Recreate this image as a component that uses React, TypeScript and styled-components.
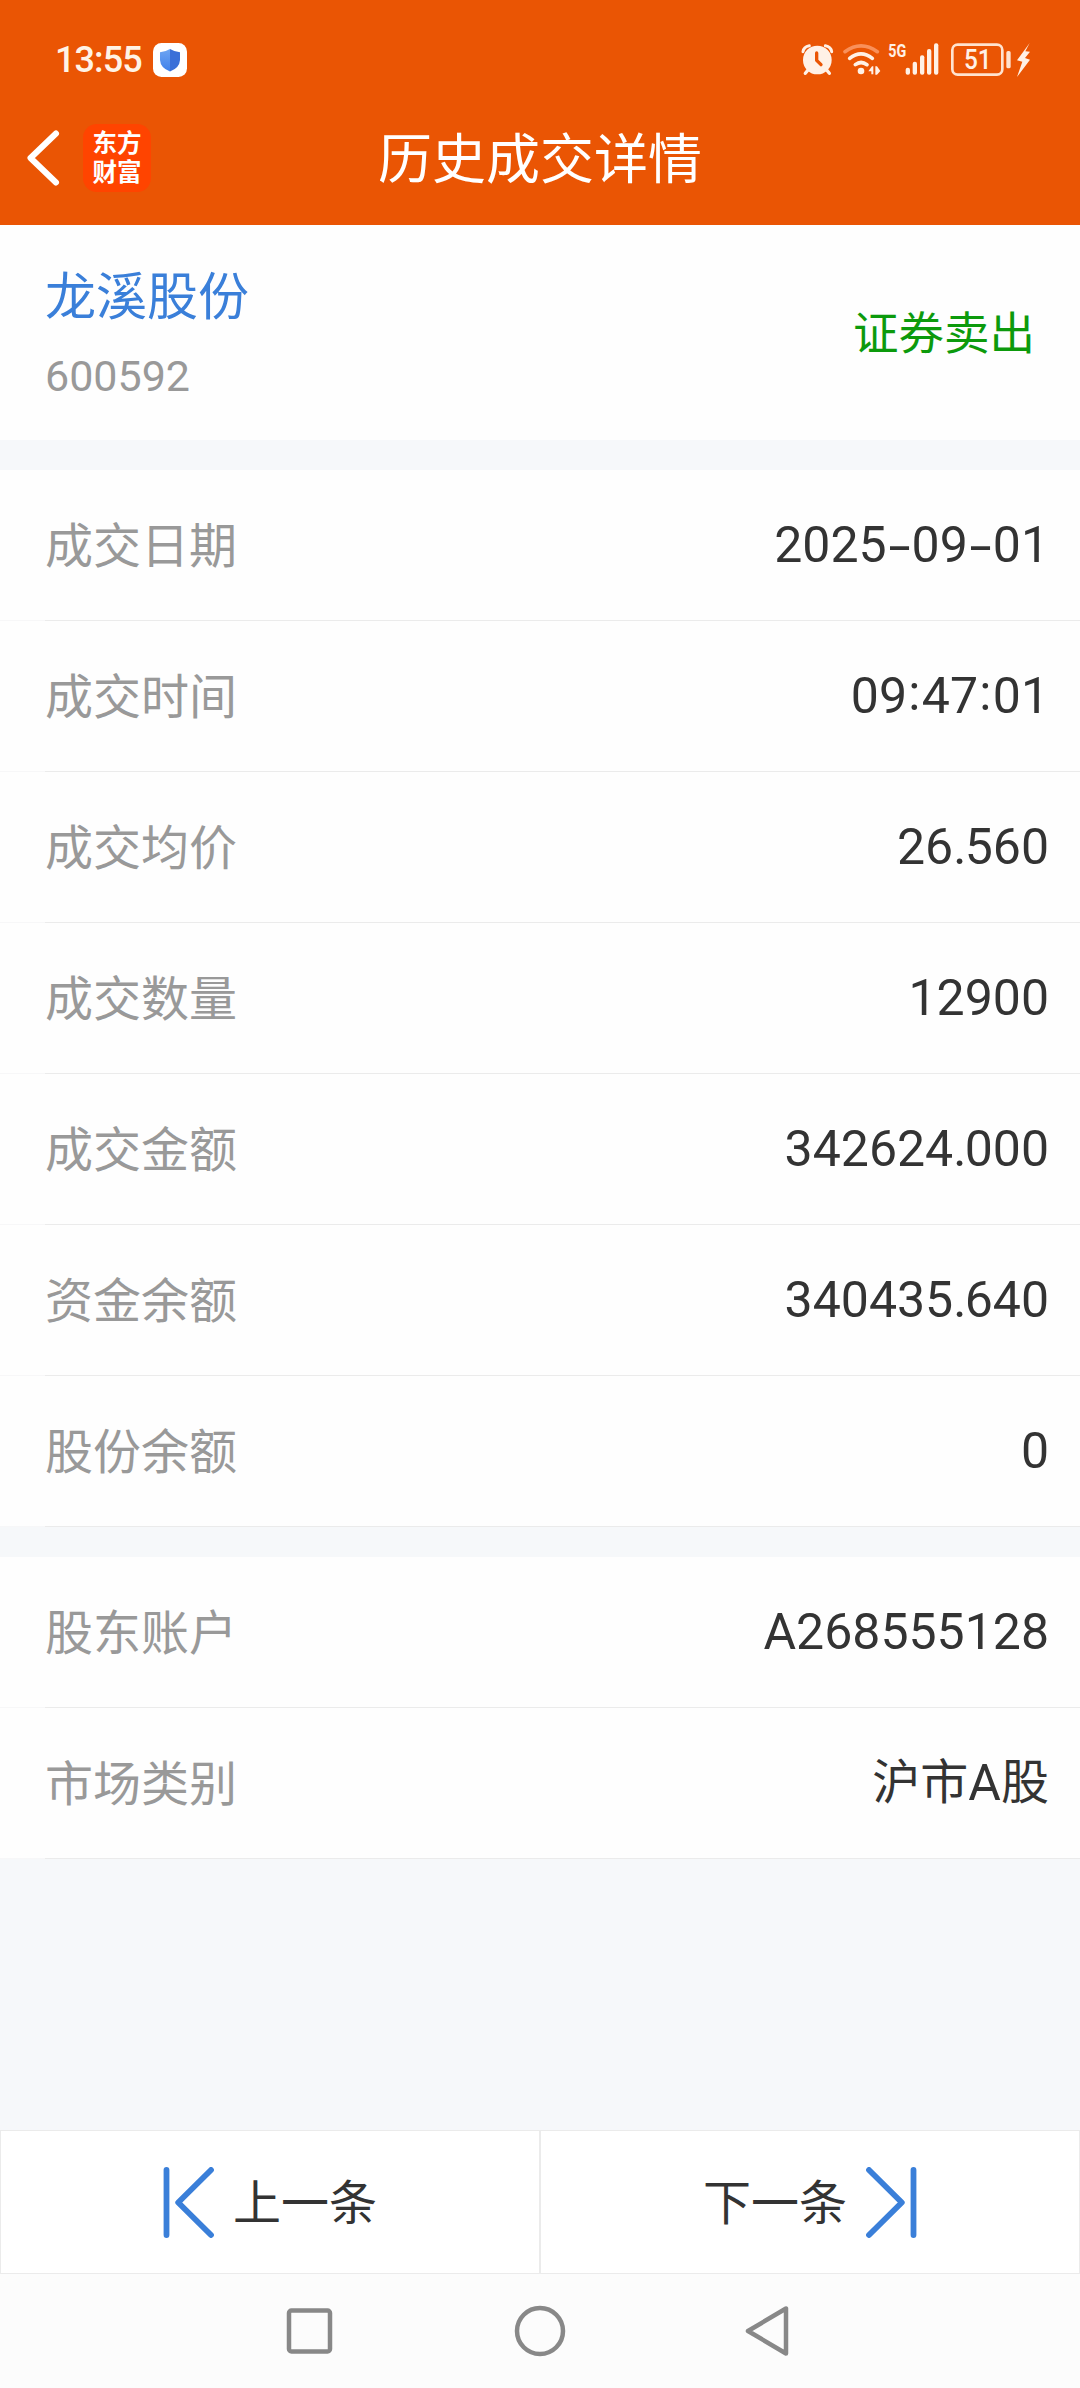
import React from 'react';
import styled, { createGlobalStyle } from 'styled-components';

const cjk = '"Noto Sans CJK SC", sans-serif';
const mixed = 'Roboto, "Noto Sans CJK SC", sans-serif';

const GlobalStyle = createGlobalStyle`
  * { box-sizing: border-box; }
  body { margin: 0; background: #f6f8fa; }
`;

const Screen = styled.div`
  width: 1080px;
  height: 2388px;
  display: flex;
  flex-direction: column;
  background: #f6f8fa;
  color: #333;
  font-family: ${mixed};
  overflow: hidden;
`;

const Header = styled.header`
  height: 225px;
  flex: none;
  background: #ea5504;
  color: #fff;
`;

const StatusBar = styled.div`
  height: 90px;
  padding: 30px 46px 0 55px;
  display: flex;
  align-items: center;
  color: #fff3e6;
`;

const Clock = styled.span`
  width: 98px;
  font-size: 36px;
  font-weight: 500;
  line-height: 40px;
  letter-spacing: -0.9px;
  white-space: nowrap;
`;

const StatusIcons = styled.div`
  display: flex;
  margin-left: auto;
`;

const TitleBar = styled.div`
  height: 135px;
  display: grid;
  grid-template-columns: 240px 1fr 240px;
  align-items: center;
`;

const TitleLeft = styled.div`
  display: flex;
  align-items: center;
  gap: 22px;
  padding-left: 25px;
`;

const AppLogo = styled.div`
  width: 68px;
  height: 68px;
  border-radius: 14px;
  background: #ff4400;
  display: flex;
  flex-direction: column;
  align-items: center;
  justify-content: center;
  font-family: ${cjk};
  font-weight: 700;
  font-size: 24.5px;
  line-height: 29px;
  padding-bottom: 4px;
`;

const Title = styled.h1`
  margin: 0;
  padding-bottom: 3px;
  font-family: ${cjk};
  font-weight: 400;
  font-size: 54px;
  line-height: 80px;
  text-align: center;
`;

const StockCard = styled.section`
  height: 215px;
  flex: none;
  margin-bottom: 30px;
  padding: 0 45px;
  background: #fefefe;
  display: flex;
  justify-content: space-between;
  align-items: center;
`;

const StockName = styled.div`
  font-family: ${cjk};
  font-size: 51px;
  line-height: 76px;
  color: #3a7fd9;
`;

const StockCode = styled.div`
  font-size: 43px;
  line-height: 60px;
  margin: 15px 0 5px;
  color: #999;
`;

const Side = styled.div`
  padding-bottom: 6px;
  font-family: ${cjk};
  font-size: 45.5px;
  line-height: 68px;
  color: #0c9a0c;
`;

const Group = styled.section`
  flex: none;
  margin-bottom: 30px;
`;

const Row = styled.div`
  height: 151px;
  padding: 0 31px 1px 45px;
  display: flex;
  justify-content: space-between;
  align-items: center;
  background:
    linear-gradient(to right, #f7f7f8 45px, #ebebeb 45px) bottom / 100% 1px no-repeat,
    #fefefe;
`;

const Label = styled.span`
  padding-bottom: 6px;
  font-family: ${cjk};
  font-size: 48px;
  line-height: 72px;
  color: #999;
`;

const ValueText = styled.span`
  font-size: 50px;
  line-height: 72px;
  color: #333;
  white-space: nowrap;
`;

const Hanzi = styled.span`
  font-family: ${cjk};
  font-size: 48px;
  line-height: 1;
  vertical-align: 1px;
`;

const Punct = styled.span<{ $w: number; $stretch?: number; $up?: number }>`
  display: inline-block;
  width: ${p => p.$w}px;
  text-align: center;
  transform: translateY(${p => -(p.$up ?? 0)}px) scaleX(${p => p.$stretch ?? 1});
`;

const Actions = styled.div`
  margin-top: auto;
  height: 144px;
  flex: none;
  display: grid;
  grid-template-columns: 1fr 1fr;
`;

const ActionButton = styled.button`
  border: 1px solid #ebebeb;
  margin: 0;
  padding: 0;
  background: #fff;
  display: flex;
  align-items: center;
  justify-content: center;
  gap: 19px;
  font-family: ${cjk};
  font-size: 48px;
  line-height: 72px;
  color: #333;
`;

const ActionText = styled.span`
  padding-bottom: 6px;
`;

const NavBar = styled.nav`
  height: 114px;
  flex: none;
  background: #fcfcfc;
  display: flex;
  justify-content: center;
  align-items: center;
  gap: 178px;
`;

const ShieldBadge = () => (
  <svg width="34" height="34" viewBox="0 0 34 34">
    <defs>
      <linearGradient id="shieldLeft" x1="0" y1="0" x2="0" y2="1">
        <stop offset="0" stopColor="#6ea5f2" />
        <stop offset="1" stopColor="#3f80ea" />
      </linearGradient>
    </defs>
    <rect width="34" height="34" rx="8.5" fill="#fff" />
    <path d="M17 6 Q12 9 7 9.3 V17 Q7.500 25 17 28.500 Z" fill="url(#shieldLeft)" />
    <path d="M17 6 Q22 9 27 9.3 V17 Q26.500 25 17 28.500 Z" fill="#3a6fd8" />
  </svg>
);

const SystemIcons = () => (
  <svg width="234" height="40" viewBox="60 60 702 120" fill="#fff1e6">
    <circle cx="112" cy="120" r="43" />
    <path d="M69 95 Q71 80 88 77M155 95 Q153 80 136 77" stroke="#fff1e6" strokeWidth="9" strokeLinecap="round" fill="none" />
    <path d="M84 150 L76 160M140 150 L148 160" stroke="#fff1e6" strokeWidth="10" strokeLinecap="round" />
    <path d="M110 99 V121 L123 134" stroke="#ea5504" strokeWidth="10" strokeLinecap="round" strokeLinejoin="round" fill="none" />
    <g fill="none" strokeWidth="11" strokeLinecap="round" stroke="#fff1e6">
      <path d="M195 95 Q243 60 292 95" stroke="#f9905a" />
      <path d="M209 115 Q243 88 277 115" />
      <path d="M226 134 Q243 121 261 134" />
    </g>
    <circle cx="243" cy="153" r="10" />
    <path d="M265 154 L276 139 H280 V163 H274 V154Z M286 139 H291 L301 153 L291 164 H286Z" />
    <text x="325" y="112" fontFamily="Roboto, sans-serif" fontWeight="700" fontSize="56" textLength="54" lengthAdjust="spacingAndGlyphs">5G</text>
    <rect x="377" y="143" width="13" height="21" rx="6" />
    <rect x="398" y="125" width="13" height="39" rx="6" />
    <rect x="420" y="106" width="13" height="58" rx="6" />
    <rect x="441" y="87" width="13" height="77" rx="6" />
    <rect x="462" y="70" width="13" height="94" rx="6" />
    <rect x="517" y="74" width="150" height="90" rx="16" fill="none" stroke="#ffe3cf" strokeWidth="8" />
    <text x="552" y="147" fontFamily="Roboto, sans-serif" fontWeight="500" fontSize="82" textLength="83" lengthAdjust="spacingAndGlyphs">51</text>
    <rect x="679" y="93" width="13" height="52" rx="5" fill="#ffe3cf" />
    <path d="M749 69 L711 121 L727 125 L711 171 L750 119 L735 114 L750 95 L736 94Z" />
  </svg>
);

const BackIcon = () => (
  <svg width="36" height="60" viewBox="0 0 36 60">
    <path d="M31 5.500 L5.500 30 L31 54.500" fill="none" stroke="#fff" strokeWidth="6" strokeLinecap="round" strokeLinejoin="round" />
  </svg>
);

const SkipIcon = ({ next = false }: { next?: boolean }) => (
  <svg width="51" height="71" viewBox="0 0 51 71">
    <g transform={next ? 'translate(51 0) scale(-1 1)' : undefined} fill="none" stroke="#3a7fd9" strokeWidth="5.8" strokeLinecap="round" strokeLinejoin="round">
      <path d="M3.500 3 V68" />
      <path d="M48 3 L15.200 35.500 L48 68" />
    </g>
  </svg>
);

const punctuation: Record<string, { $w: number; $stretch?: number; $up?: number }> = {
  '-': { $w: 25, $stretch: 1.6, $up: -1 },
  ':': { $w: 14.8, $up: 3 },
  '.': { $w: 11.5 },
};

const Value = ({ text }: { text: string }) => (
  <ValueText>
    {text.split(/([-:.]|[\u4e00-\u9fff]+)/).filter(Boolean).map((part, i) => {
      if (punctuation[part]) return <Punct key={i} {...punctuation[part]}>{part}</Punct>;
      if (/[\u4e00-\u9fff]/.test(part)) return <Hanzi key={i}>{part}</Hanzi>;
      return part;
    })}
  </ValueText>
);

const trade = [
  ['成交日期', '2025-09-01'],
  ['成交时间', '09:47:01'],
  ['成交均价', '26.560'],
  ['成交数量', '12900'],
  ['成交金额', '342624.000'],
  ['资金余额', '340435.640'],
  ['股份余额', '0'],
];

const account = [
  ['股东账户', 'A268555128'],
  ['市场类别', '沪市A股'],
];

const Rows = ({ items }: { items: string[][] }) => (
  <Group>
    {items.map(([label, value]) => (
      <Row key={label}>
        <Label>{label}</Label>
        <Value text={value} />
      </Row>
    ))}
  </Group>
);

export default function App() {
  return (
    <Screen>
      <GlobalStyle />
      <Header>
        <StatusBar>
          <Clock>13:55</Clock>
          <ShieldBadge />
          <StatusIcons><SystemIcons /></StatusIcons>
        </StatusBar>
        <TitleBar>
          <TitleLeft>
            <BackIcon />
            <AppLogo>
              <span>东方</span>
              <span>财富</span>
            </AppLogo>
          </TitleLeft>
          <Title>历史成交详情</Title>
        </TitleBar>
      </Header>
      <StockCard>
        <div>
          <StockName>龙溪股份</StockName>
          <StockCode>600592</StockCode>
        </div>
        <Side>证券卖出</Side>
      </StockCard>
      <Rows items={trade} />
      <Rows items={account} />
      <Actions>
        <ActionButton>
          <SkipIcon />
          <ActionText>上一条</ActionText>
        </ActionButton>
        <ActionButton>
          <ActionText>下一条</ActionText>
          <SkipIcon next />
        </ActionButton>
      </Actions>
      <NavBar>
        <svg width="52" height="52" viewBox="0 0 52 52" fill="none" stroke="#888" strokeWidth="4.500">
          <rect x="5" y="5.500" width="41" height="41" rx="2.500" />
        </svg>
        <svg width="52" height="52" viewBox="0 0 52 52" fill="none" stroke="#888" strokeWidth="4.500">
          <circle cx="26" cy="26" r="23" />
        </svg>
        <svg width="52" height="52" viewBox="0 0 52 52" fill="none" stroke="#888" strokeWidth="4.500" strokeLinejoin="round">
          <path d="M43.500 3.500 V48.500 L5.500 26Z" transform="translate(-1.500 0)" />
        </svg>
      </NavBar>
    </Screen>
  );
}
